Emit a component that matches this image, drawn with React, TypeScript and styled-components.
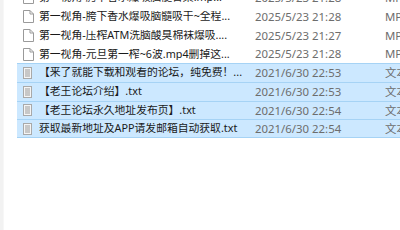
import React from 'react';
import styled, { createGlobalStyle } from 'styled-components';

interface FileRow {
  name: string;
  date: string;
  type: string;
  kind: 'video' | 'text';
  selected?: boolean;
}

const rows: FileRow[] = [
  { name: '第一视角-胯下香水爆吸脑髓合集.mp...', date: '2025/5/23 21:28', type: 'MP4 文件', kind: 'video' },
  { name: '第一视角-胯下香水爆吸脑髓吸干~全程...', date: '2025/5/23 21:28', type: 'MP4 文件', kind: 'video' },
  { name: '第一视角-压榨ATM洗脑酸臭棉袜爆吸....', date: '2025/5/23 21:27', type: 'MP4 文件', kind: 'video' },
  { name: '第一视角-元旦第一榨~6波.mp4删掉这...', date: '2025/5/23 21:28', type: 'MP4 文件', kind: 'video' },
  { name: '【来了就能下载和观看的论坛，纯免费！...', date: '2021/6/30 22:53', type: '文本文档', kind: 'text', selected: true },
  { name: '【老王论坛介绍】.txt', date: '2021/6/30 22:53', type: '文本文档', kind: 'text', selected: true },
  { name: '【老王论坛永久地址发布页】.txt', date: '2021/6/30 22:54', type: '文本文档', kind: 'text', selected: true },
  { name: '获取最新地址及APP请发邮箱自动获取.txt', date: '2021/6/30 22:54', type: '文本文档', kind: 'text', selected: true },
];

const BlankPageIcon = () => (
  <svg width="11" height="13" viewBox="0 0 11 13">
    <path d="M0.5 0.5 H7 L10.5 4 V12.5 H0.5 Z" fill="#fff" stroke="#9a9a9a" strokeWidth="1" />
    <path d="M7 0.5 V4 H10.5" fill="none" stroke="#9a9a9a" strokeWidth="1" />
  </svg>
);

const TextFileIcon = () => (
  <svg width="9" height="12" viewBox="0 0 9 12">
    <rect x="0.5" y="0.5" width="8" height="11" fill="#f4f4f4" stroke="#a9a9a9" />
    <path d="M2 3 H7 M2 5 H7 M2 7 H7 M2 9 H7" stroke="#9b9b9b" strokeWidth="1" />
  </svg>
);

const App: React.FC = () => {
  return (
    <>
      <GlobalStyle />
      <Window>
        <Edge />
        <List>
          {rows.map((row, i) => (
            <Row key={i} $selected={!!row.selected} $last={i === rows.length - 1}>
              <IconCell>{row.kind === 'text' ? <TextFileIcon /> : <BlankPageIcon />}</IconCell>
              <Name>{row.name}</Name>
              <Meta>{row.date}</Meta>
              <Meta>{row.type}</Meta>
            </Row>
          ))}
        </List>
      </Window>
    </>
  );
};

const GlobalStyle = createGlobalStyle`
  html, body {
    margin: 0;
    padding: 0;
    background: #ffffff;
    overflow: hidden;
  }
  body {
    font-family: "Noto Sans", "Noto Sans CJK SC", sans-serif;
  }
`;

const Window = styled.div`
  display: flex;
  width: 400px;
  height: 230px;
  overflow: hidden;
  background: #ffffff;
`;

const Edge = styled.div`
  width: 3px;
  flex-shrink: 0;
  background: #f2f2f2;
  border-right: 1px solid #f7f7f7;
`;

const List = styled.div`
  flex: 1;
  margin-top: -12px;
  padding-left: 13px;
`;

const Row = styled.div<{ $selected: boolean; $last: boolean }>`
  display: grid;
  grid-template-columns: 16px 216px 130px 60px;
  align-items: center;
  height: 18.75px;
  box-sizing: border-box;
  padding-left: 6px;
  white-space: nowrap;
  background: ${({ $selected }) => ($selected ? '#cce8ff' : 'transparent')};
  border-top: 1px solid ${({ $selected }) => ($selected ? '#a6d3f5' : 'transparent')};
  border-bottom: ${({ $selected, $last }) => ($selected && $last ? '1px solid #a6d3f5' : 'none')};
`;

const IconCell = styled.div`
  display: flex;
  align-items: center;
  height: 100%;
`;

const Name = styled.span`
  font-size: 10.8px;
  color: #1a1a1a;
  overflow: hidden;
  line-height: 1;
`;

const Meta = styled.span`
  font-size: 11.4px;
  color: #6d6d6d;
  overflow: hidden;
  line-height: 1;
`;

export default App;
